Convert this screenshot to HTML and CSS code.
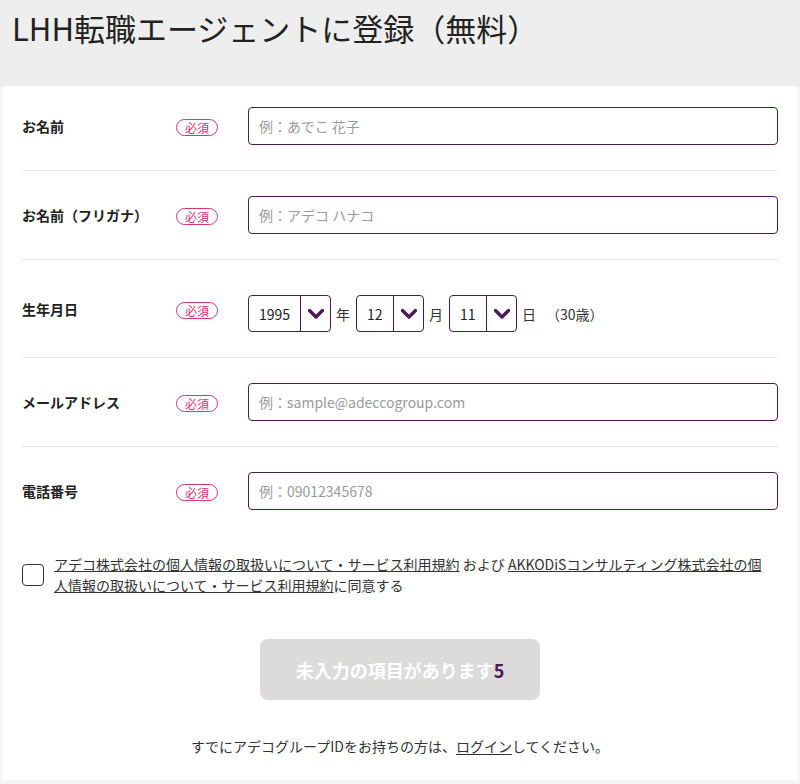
FILE: index.html
```html
<!DOCTYPE html>
<html lang="ja">
<head>
<meta charset="utf-8">
<title>LHH転職エージェントに登録（無料）</title>
<link rel="stylesheet" href="styles.css">
</head>
<body>
<header class="head">
  <h1 class="title">LHH転職エージェントに登録（無料）</h1>
</header>
<main class="card">
  <div class="row row-first">
    <div class="label">お名前</div>
    <div class="badge-cell"><span class="badge">必須</span></div>
    <input class="text-input" type="text" placeholder="例：あでこ 花子">
  </div>
  <div class="row">
    <div class="label">お名前（フリガナ）</div>
    <div class="badge-cell"><span class="badge">必須</span></div>
    <input class="text-input" type="text" placeholder="例：アデコ ハナコ">
  </div>
  <div class="row">
    <div class="label">生年月日</div>
    <div class="badge-cell"><span class="badge">必須</span></div>
    <div class="date">
      <div class="sel sel-year"><span class="sel-val">1995</span><span class="sel-btn"><svg width="16" height="12" viewBox="0 0 16 12"><path d="M1.5 2.5 L8 9 L14.5 2.5" fill="none" stroke="#4b1b53" stroke-width="3.4" stroke-linecap="round" stroke-linejoin="round"/></svg></span></div>
      <span class="unit">年</span>
      <div class="sel"><span class="sel-val">12</span><span class="sel-btn"><svg width="16" height="12" viewBox="0 0 16 12"><path d="M1.5 2.5 L8 9 L14.5 2.5" fill="none" stroke="#4b1b53" stroke-width="3.4" stroke-linecap="round" stroke-linejoin="round"/></svg></span></div>
      <span class="unit">月</span>
      <div class="sel"><span class="sel-val">11</span><span class="sel-btn"><svg width="16" height="12" viewBox="0 0 16 12"><path d="M1.5 2.5 L8 9 L14.5 2.5" fill="none" stroke="#4b1b53" stroke-width="3.4" stroke-linecap="round" stroke-linejoin="round"/></svg></span></div>
      <span class="unit">日</span>
      <span class="age">（30歳）</span>
    </div>
  </div>
  <div class="row">
    <div class="label">メールアドレス</div>
    <div class="badge-cell"><span class="badge">必須</span></div>
    <input class="text-input" type="text" placeholder="例：sample@adeccogroup.com">
  </div>
  <div class="row row-last">
    <div class="label">電話番号</div>
    <div class="badge-cell"><span class="badge">必須</span></div>
    <input class="text-input" type="text" placeholder="例：09012345678">
  </div>
  <div class="agree">
    <span class="checkbox"></span>
    <p class="agree-text"><a href="#">アデコ株式会社の個人情報の取扱いについて・サービス利用規約</a> および <a href="#">AKKODiSコンサルティング株式会社の個人情報の取扱いについて・サービス利用規約</a>に同意する</p>
  </div>
  <div class="submit-wrap">
    <button class="submit" type="button">未入力の項目があります<span class="count">5</span></button>
  </div>
  <p class="login">すでにアデコグループIDをお持ちの方は、<a href="#">ログイン</a>してください。</p>
</main>
</body>
</html>
```
FILE: styles.css
```css
* { box-sizing: border-box; }
html, body { margin: 0; padding: 0; }
body {
  background: #f5f5f5;
  font-family: "Noto Sans CJK JP", "Noto Sans", sans-serif;
  color: #222;
}
.head {
  background: #eeeeee;
  height: 86px;
  padding: 7px 12px 0;
}
.title {
  margin: 0;
  font-size: 31px;
  font-weight: 400;
  line-height: 42px;
  color: #222;
}
.card {
  background: #fff;
  margin: 0 3px;
  padding: 0 19px 4px;
  height: 694px;
}
.row {
  display: grid;
  grid-template-columns: 154px 72px 1fr;
  align-items: center;
  padding: 25px 0;
  border-bottom: 1px solid #e6e6e6;
}
.row-first { padding-top: 21px; }
.row-last { border-bottom: none; }
.label {
  font-size: 14px;
  font-weight: 700;
  color: #222;
}
.badge {
  display: inline-block;
  border: 1px solid #d7347a;
  color: #d7347a;
  border-radius: 9px;
  font-size: 12px;
  line-height: 15px;
  padding: 0 8px;
}
.text-input {
  display: block;
  width: 100%;
  height: 38px;
  border: 1px solid #4b1b53;
  border-radius: 4px;
  padding: 0 10px;
  font-family: inherit;
  font-size: 14px;
  color: #222;
  background: #fff;
  outline: none;
}
.text-input::placeholder { color: #9a9a9a; }
.date {
  display: flex;
  align-items: center;
  padding-top: 10px;
  font-size: 14px;
}
.sel {
  display: flex;
  height: 37px;
  width: 68px;
  border: 1px solid #4b1b53;
  border-radius: 4px;
}
.sel-year { width: 83px; }
.sel-val {
  flex: 1;
  display: flex;
  align-items: center;
  padding-left: 10px;
  font-size: 14px;
  color: #222;
}
.sel-btn {
  width: 30px;
  border-left: 1px solid #4b1b53;
  display: flex;
  align-items: center;
  justify-content: center;
}
.unit { margin: 0 6px 0 5px; color: #333; }
.age { margin-left: 4px; color: #333; }
.agree {
  display: flex;
  align-items: center;
  gap: 10px;
  margin-top: 19px;
  padding-right: 14px;
}
.checkbox {
  flex: none;
  width: 22px;
  height: 22px;
  border: 1px solid #333;
  border-radius: 4px;
  background: #fff;
}
.agree-text {
  margin: 0;
  font-size: 14px;
  line-height: 21px;
  color: #333;
}
.agree-text a { color: #333; text-decoration: underline; text-underline-offset: 1px; }
.submit-wrap {
  display: flex;
  justify-content: center;
  margin-top: 43px;
}
.submit {
  width: 280px;
  height: 61px;
  border: none;
  border-radius: 8px;
  background: #dddada;
  color: #fff;
  font-family: inherit;
  font-size: 18px;
  font-weight: 700;
}
.count { color: #4b1b53; }
.login {
  margin: 36px 0 0;
  text-align: center;
  font-size: 14px;
  color: #333;
}
.login a { color: #333; text-decoration: underline; text-underline-offset: 2px; }
```
